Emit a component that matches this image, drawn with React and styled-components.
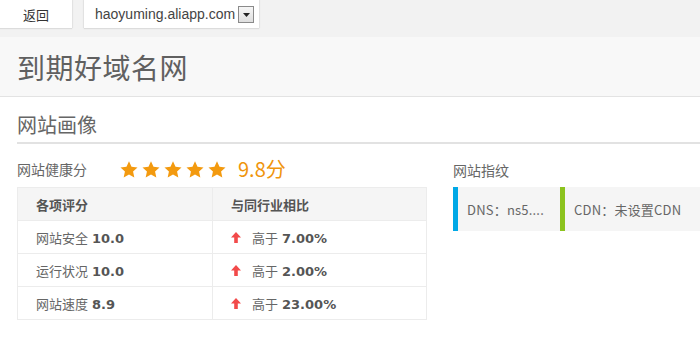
import React from 'react';
import styled, { createGlobalStyle } from 'styled-components';

const GlobalStyle = createGlobalStyle`
  html, body {
    margin: 0;
    padding: 0;
    background: #ffffff;
  }
  body {
    font-family: "Noto Sans CJK SC", "Liberation Sans", sans-serif;
    color: #666;
    overflow: hidden;
  }
`;

const cjk = '"Microsoft YaHei", "Noto Sans CJK SC", sans-serif';
const verdana = '"DejaVu Sans", "Noto Sans CJK SC", sans-serif';

const Page = styled.div`
  width: 700px;
  height: 339px;
  overflow: hidden;
`;

const TopBar = styled.div`
  height: 37px;
  background: #f2f2f2;
  display: flex;
  align-items: flex-start;
  gap: 12px;
`;

const BackButton = styled.div`
  width: 72px;
  height: 28px;
  background: #fff;
  box-shadow: 0 1px 1px #dcdcdc, 1px 0 1px #e4e4e4;
  display: flex;
  align-items: center;
  justify-content: center;
  font-family: ${cjk};
  font-size: 13px;
  color: #333;
`;

const SiteSelect = styled.div`
  width: 175px;
  height: 28px;
  background: #fff;
  box-shadow: 0 1px 1px #dcdcdc, 1px 0 1px #e4e4e4, -1px 0 1px #e4e4e4;
  display: flex;
  align-items: center;
  padding-left: 11px;
  box-sizing: border-box;
  gap: 3px;
  font-family: "Liberation Sans", Arial, sans-serif;
  font-size: 14px;
  color: #444;
`;

const SelectArrow = styled.div`
  width: 14px;
  height: 15px;
  border: 1px solid #8a8a8a;
  background: linear-gradient(#f6f6f6, #dedede);
  display: flex;
  align-items: center;
  justify-content: center;
  margin-top: 1px;
`;

const Header = styled.div`
  height: 59px;
  background: #f8f8f8;
  border-bottom: 1px solid #e3e3e3;
  display: flex;
  align-items: center;
  padding-left: 17px;
`;

const SiteTitle = styled.h1`
  margin: 0;
  font-family: ${cjk};
  font-weight: normal;
  font-size: 28px;
  color: #606060;
  letter-spacing: 0.5px;
`;

const Body = styled.div`
  padding: 14px 0 0 17px;
`;

const SectionTitle = styled.h2`
  margin: 0;
  font-family: ${cjk};
  font-weight: normal;
  font-size: 20px;
  color: #666;
  line-height: 28px;
  padding-bottom: 3px;
  border-bottom: 2px solid #e2e2e2;
`;

const Columns = styled.div`
  display: flex;
  gap: 26px;
  padding-top: 10px;
`;

const LeftCol = styled.div`
  width: 410px;
`;

const RightCol = styled.div`
  flex: 1;
  padding-top: 6px;
`;

const ScoreLine = styled.div`
  display: flex;
  align-items: center;
  height: 30px;
`;

const Label = styled.span`
  display: block;
  font-family: ${cjk};
  font-size: 14px;
  line-height: 20px;
  color: #666;
`;

const Stars = styled.div`
  display: flex;
  gap: 4px;
  margin-left: 33px;
`;

const ScoreValue = styled.span`
  font-family: ${cjk};
  font-size: 20px;
  color: #f0950c;
  margin-left: 12px;
  margin-top: -2px;
`;

const Table = styled.table`
  width: 410px;
  table-layout: fixed;
  border-collapse: collapse;
  margin-top: 3px;
  font-family: ${cjk};
  font-size: 13px;
  color: #666;
`;

const HeadCell = styled.th`
  height: 32px;
  background: #f5f5f5;
  border: 1px solid #ececec;
  text-align: left;
  padding: 0 0 0 18px;
  font-weight: bold;
  color: #555;
  width: ${(p) => p.$w || 'auto'};
`;

const Cell = styled.td`
  height: 32px;
  border: 1px solid #ececec;
  padding: 0 0 0 18px;
  color: #666;
`;

const Num = styled.b`
  font-family: ${verdana};
  font-size: 13px;
  color: #555;
  margin-left: 4px;
`;

const Compare = styled.div`
  display: flex;
  align-items: center;
  gap: 11px;
`;

const PrintBar = styled.div`
  display: flex;
  margin-top: 7px;
  height: 44px;
  background: #f5f5f5;
`;

const PrintItem = styled.div`
  display: flex;
  align-items: center;
  border-left: 5px solid ${(p) => p.$color};
  padding-left: 9px;
  width: ${(p) => p.$w};
  box-sizing: border-box;
  font-family: ${cjk};
  font-size: 13px;
  color: #666;
  letter-spacing: 0.2px;
`;

function Star() {
  return (
    <svg width="18" height="17" viewBox="0 0 24 23">
      <path
        d="M12 0.5l3.4 7.4 8.1 0.9-6 5.5 1.7 8-7.2-4.1-7.2 4.1 1.7-8-6-5.5 8.1-0.9z"
        fill="#f39a0f"
      />
    </svg>
  );
}

function UpArrow() {
  return (
    <svg width="10" height="11" viewBox="0 0 10 11">
      <path d="M5 0L10 5.5H6.8V11H3.2V5.5H0z" fill="#f24a4a" />
    </svg>
  );
}

const rows = [
  { name: '网站安全', score: '10.0', pct: '7.00%' },
  { name: '运行状况', score: '10.0', pct: '2.00%' },
  { name: '网站速度', score: '8.9', pct: '23.00%' },
];

export default function App() {
  return (
    <Page>
      <GlobalStyle />
      <TopBar>
        <BackButton>返回</BackButton>
        <SiteSelect>
          haoyuming.aliapp.com
          <SelectArrow>
            <svg width="7" height="4" viewBox="0 0 7 4">
              <path d="M0 0h7L3.5 4z" fill="#222" />
            </svg>
          </SelectArrow>
        </SiteSelect>
      </TopBar>
      <Header>
        <SiteTitle>到期好域名网</SiteTitle>
      </Header>
      <Body>
        <SectionTitle>网站画像</SectionTitle>
        <Columns>
          <LeftCol>
            <ScoreLine>
              <Label>网站健康分</Label>
              <Stars>
                {[0, 1, 2, 3, 4].map((i) => (
                  <Star key={i} />
                ))}
              </Stars>
              <ScoreValue>9.8分</ScoreValue>
            </ScoreLine>
            <Table>
              <thead>
                <tr>
                  <HeadCell $w="176px">各项评分</HeadCell>
                  <HeadCell>与同行业相比</HeadCell>
                </tr>
              </thead>
              <tbody>
                {rows.map((r) => (
                  <tr key={r.name}>
                    <Cell>
                      {r.name}
                      <Num>{r.score}</Num>
                    </Cell>
                    <Cell>
                      <Compare>
                        <UpArrow />
                        <span>
                          高于<Num>{r.pct}</Num>
                        </span>
                      </Compare>
                    </Cell>
                  </tr>
                ))}
              </tbody>
            </Table>
          </LeftCol>
          <RightCol>
            <Label>网站指纹</Label>
            <PrintBar>
              <PrintItem $color="#00a8e6" $w="107px">DNS：ns5....</PrintItem>
              <PrintItem $color="#8cc31e" $w="140px">CDN：未设置CDN</PrintItem>
            </PrintBar>
          </RightCol>
        </Columns>
      </Body>
    </Page>
  );
}
